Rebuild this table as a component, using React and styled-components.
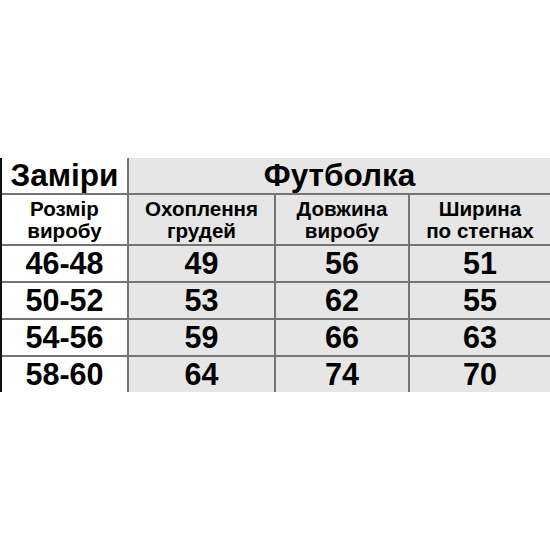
import React from "react";
import styled, { createGlobalStyle } from "styled-components";

const Global = createGlobalStyle`
  html, body { margin: 0; padding: 0; background: #fff; }
  body { font-family: "Liberation Sans", Arial, sans-serif; }
`;

const Page = styled.div`
  width: 550px;
  height: 550px;
  display: flex;
  align-items: center;
`;

const Table = styled.div`
  width: 550px;
  box-sizing: border-box;
  border-left: 2px solid #111;
  display: grid;
  grid-template-columns: 125px 145px 132px 1fr;
  grid-template-rows: 35px 49px 35px 35px 35px 35px;
  gap: 2px;
  background: #747474;
`;

const Cell = styled.div`
  background: ${(p) => (p.$gray ? "#e6e6e6" : "#ffffff")};
  color: #000;
  font-weight: 700;
  display: flex;
  align-items: center;
  justify-content: center;
  text-align: center;
  white-space: nowrap;
  grid-column: ${(p) => p.$span || "auto"};
  font-size: ${(p) => (p.$head ? "20.6px" : p.$title ? "31.5px" : "30.5px")};
  line-height: ${(p) => (p.$head ? "22px" : "1")};
  padding-top: ${(p) => (p.$head ? "1px" : "0")};
`;

const rows = [
  ["46-48", "49", "56", "51"],
  ["50-52", "53", "62", "55"],
  ["54-56", "59", "66", "63"],
  ["58-60", "64", "74", "70"],
];

export default function App() {
  return (
    <>
      <Global />
      <Page>
        <Table>
          <Cell $title>Заміри</Cell>
          <Cell $title $gray $span="2 / 5">Футболка</Cell>
          <Cell $head>Розмір<br />виробу</Cell>
          <Cell $head $gray>Охоплення<br />грудей</Cell>
          <Cell $head $gray>Довжина<br />виробу</Cell>
          <Cell $head $gray>Ширина<br />по стегнах</Cell>
          {rows.map((r) =>
            r.map((v, i) => (
              <Cell key={r[0] + i} $gray={i > 0}>
                {v}
              </Cell>
            ))
          )}
        </Table>
      </Page>
    </>
  );
}
